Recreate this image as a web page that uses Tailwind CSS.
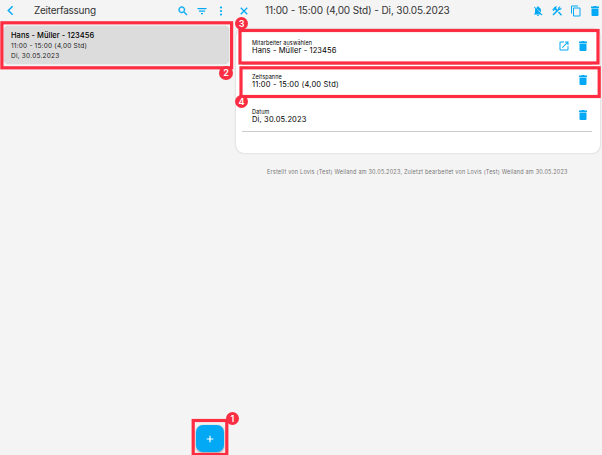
<!DOCTYPE html>
<html lang="de">
<head>
<meta charset="utf-8">
<title>Zeiterfassung</title>
<script src="https://cdn.jsdelivr.net/npm/@tailwindcss/browser@4"></script>
</head>
<body class="relative flex h-[455px] w-[602px] overflow-hidden bg-[#f4f4f4] font-['Inter','Liberation_Sans',sans-serif] text-[#222]">
<svg class="hidden">
  <symbol id="trash" viewBox="0 0 24 24"><path d="M5 7h14v13a2 2 0 0 1-2 2H7a2 2 0 0 1-2-2zM4 3h4.500l1-1h5l1 1H20v3H4z"/></symbol>
</svg>

<aside class="flex w-[234px] shrink-0 flex-col">
  <header class="flex h-[21px] items-center pl-[7px] pr-[8px] text-[#03a9f4]">
    <svg class="h-[9px] w-[7px]" viewBox="0 0 7 9" fill="none" stroke="currentColor" stroke-width="1.500"><path d="M5.700.3 1.300 4.500l4.400 4.200"/></svg>
    <h1 class="ml-[20px] flex-1 text-[10px] leading-[21px] tracking-[-0.260px] whitespace-nowrap text-[#333]">Zeiterfassung</h1>
    <svg class="mr-[7px] size-[12px]" viewBox="0 0 24 24" fill="currentColor" stroke="currentColor" stroke-width=".7"><path d="M15.500 14h-.79l-.28-.27A6.500 6.500 0 1 0 13.730 14.430l.27.28v.79l5 4.990L20.490 19zm-6 0a4.500 4.500 0 1 1 0-9 4.500 4.500 0 0 1 0 9z"/></svg>
    <svg class="mr-[7px] size-[12px]" viewBox="0 0 24 24" fill="currentColor"><path d="M10 18.500h4V16h-4zM3 6v2.300h18V6zm3 7.300h12V11H6z"/></svg>
    <svg class="-mr-[1px] size-[12px]" viewBox="0 0 24 24" fill="currentColor"><circle cx="12" cy="5" r="2.200"/><circle cx="12" cy="12" r="2.200"/><circle cx="12" cy="19" r="2.200"/></svg>
  </header>
  <div class="mt-[5px] ml-[4px] h-[38px] w-[225px] rounded-[5px] bg-[#dcdcdc] pt-[4px] pl-[7px] whitespace-nowrap shadow-[0_0_1px_#aaa]">
    <p class="text-[7.500px] leading-[11px] font-medium tracking-[0.030px] text-black">Hans - Müller - 123456</p>
    <p class="text-[6.500px] leading-[10px] tracking-[0.200px]">11:00 - 15:00 (4,00 Std)</p>
    <p class="text-[6.500px] leading-[10px] tracking-[0.220px]">Di, 30.05.2023</p>
  </div>
</aside>

<main class="flex flex-1 flex-col">
  <header class="flex h-[29px] items-start pl-[4px] pr-[1px] text-[#03a9f4]">
    <svg class="mt-[5px] size-[12px]" viewBox="0 0 24 24" fill="none" stroke="currentColor" stroke-width="2.600"><path d="m5.500 5.500 13 13m0-13-13 13"/></svg>
    <h2 class="ml-[15px] flex-1 text-[10px] leading-[21px] tracking-[-0.120px] whitespace-nowrap text-[#333]">11:00 - 15:00 (4,00 Std) - Di, 30.05.2023</h2>
    <svg class="mt-[5px] mr-[7px] size-[12px]" viewBox="0 0 24 24" fill="currentColor"><path d="M20 18.690 7.840 6.140 5.270 3.490 4 4.760l2.800 2.800v.01A6.900 6.900 0 0 0 6 11v5l-2 2v1h13.730l2 2L21 19.720zM12 22a2 2 0 0 0 2-2h-4a2 2 0 0 0 2 2zm6-7.320V11c0-3.080-1.640-5.640-4.500-6.320V4a1.500 1.500 0 0 0-3 0v.68c-.9.220-1.680.62-2.350 1.150z"/></svg>
    <svg class="mt-[5px] mr-[7px] size-[12px]" viewBox="0 0 24 24" fill="currentColor"><path d="m13.800 15.200 2.100-2.100 5.300 5.200a1.500 1.500 0 0 1-2.100 2.200zM17.500 10a3.500 3.500 0 0 0 3.200-5l-2.700 2.700-1.500-1.500 2.700-2.700a3.500 3.500 0 0 0-4.900 4.100L12.500 9.500l-1.800-1.800.7-.7L10 5.600 12.100 3.500a3 3 0 0 0-4.200 0L4.300 7.100l1.400 1.400H2.900l-.7.700 3.500 3.500.7-.7V9.200l1.400 1.400.7-.7 1.800 1.800-7.400 7.400 2.100 2.100L16.200 10c.4 0 .8.100 1.300 0z"/></svg>
    <svg class="mt-[5px] mr-[7px] size-[12px]" viewBox="0 0 24 24" fill="currentColor"><path d="M16 1H4a2 2 0 0 0-2 2v14h2V3h12zm3 4H8a2 2 0 0 0-2 2v14a2 2 0 0 0 2 2h11a2 2 0 0 0 2-2V7a2 2 0 0 0-2-2zm0 16H8V7h11z"/></svg>
    <svg class="mt-[5px] size-[12px] fill-[#03a9f4]"><use href="#trash"/></svg>
  </header>

  <section class="ml-[2px] h-[124px] w-[364px] rounded-[8px] bg-white pr-[8px] pl-[6px] whitespace-nowrap text-black shadow-[0_0_2px_#bbb]">
    <div class="flex h-[36px] items-start border-b border-[#ccc] pt-[10.500px] pl-[10px] pr-[3px]">
      <div class="flex-1">
        <p class="text-[5.500px] leading-[7px] tracking-[0.120px]">Mitarbeiter auswählen</p>
        <p class="text-[7.500px] leading-[7px] tracking-[0.120px]">Hans - Müller - 123456</p>
      </div>
      <svg class="mr-[7px] size-[12px] text-[#03a9f4]" viewBox="0 0 24 24" fill="currentColor"><path d="M19 19H5V5h7V3H5a2 2 0 0 0-2 2v14a2 2 0 0 0 2 2h14a2 2 0 0 0 2-2v-7h-2zM14 3v2h3.590l-9.830 9.830 1.410 1.410L19 6.410V10h2V3z"/></svg>
      <svg class="size-[12px] fill-[#03a9f4]"><use href="#trash"/></svg>
    </div>
    <div class="flex h-[32px] items-start border-b border-[#ccc] pt-[9px] pl-[10px] pr-[3px]">
      <div class="flex-1">
        <p class="text-[5.500px] leading-[7px] tracking-[0.100px]">Zeitspanne</p>
        <p class="text-[7.500px] leading-[7px] tracking-[0.200px]">11:00 - 15:00 (4,00 Std)</p>
      </div>
      <svg class="size-[12px] fill-[#03a9f4]"><use href="#trash"/></svg>
    </div>
    <div class="flex h-[35px] items-start border-b border-[#ccc] pt-[11.500px] pl-[10px] pr-[3px]">
      <div class="flex-1">
        <p class="text-[5.500px] leading-[7px] tracking-[0.100px]">Datum</p>
        <p class="text-[7.500px] leading-[7px] tracking-[0.150px]">Di, 30.05.2023</p>
      </div>
      <svg class="size-[12px] fill-[#03a9f4]"><use href="#trash"/></svg>
    </div>
  </section>
  <p class="mt-[15px] ml-[33px] text-[5.500px] leading-[9px] tracking-[0.205px] whitespace-nowrap text-[#777]">Erstellt von Lovis (Test) Weiland am 30.05.2023, Zuletzt bearbeitet von Lovis (Test) Weiland am 30.05.2023</p>
</main>

<button class="absolute top-[425px] left-[196px] flex h-[27px] w-[28px] items-center justify-center rounded-[7px] bg-[#03a9f4] shadow-[0_1px_3px_#999]">
  <svg class="size-[8px]" viewBox="0 0 8 8" stroke="white" stroke-width="1.200"><path d="M4 .7v6.600M.7 4h6.600"/></svg>
</button>

<svg class="pointer-events-none absolute inset-0 h-[455px] w-[602px]" viewBox="0 0 602 455" fill="none" stroke="#ff2d42" stroke-width="3.200">
  <rect x="1.900" y="22.800" width="229.700" height="45"/>
  <rect x="240" y="30.500" width="358" height="32.500"/>
  <rect x="241" y="67.800" width="358.200" height="28.700"/>
  <rect x="193.200" y="420.500" width="33.600" height="34"/>
</svg>
<span class="absolute top-[412px] left-[226px] flex size-[13px] items-center justify-center rounded-full bg-[#fa2d42] text-[9px] font-semibold text-white">1</span>
<span class="absolute top-[66px] left-[219px] flex size-[14px] items-center justify-center rounded-full bg-[#fa2d42] text-[9px] font-semibold text-white">2</span>
<span class="absolute top-[17px] left-[235px] flex size-[13px] items-center justify-center rounded-full bg-[#fa2d42] text-[9px] font-semibold text-white">3</span>
<span class="absolute top-[95px] left-[235px] flex size-[13px] items-center justify-center rounded-full bg-[#fa2d42] text-[9px] font-semibold text-white">4</span>
</body>
</html>
